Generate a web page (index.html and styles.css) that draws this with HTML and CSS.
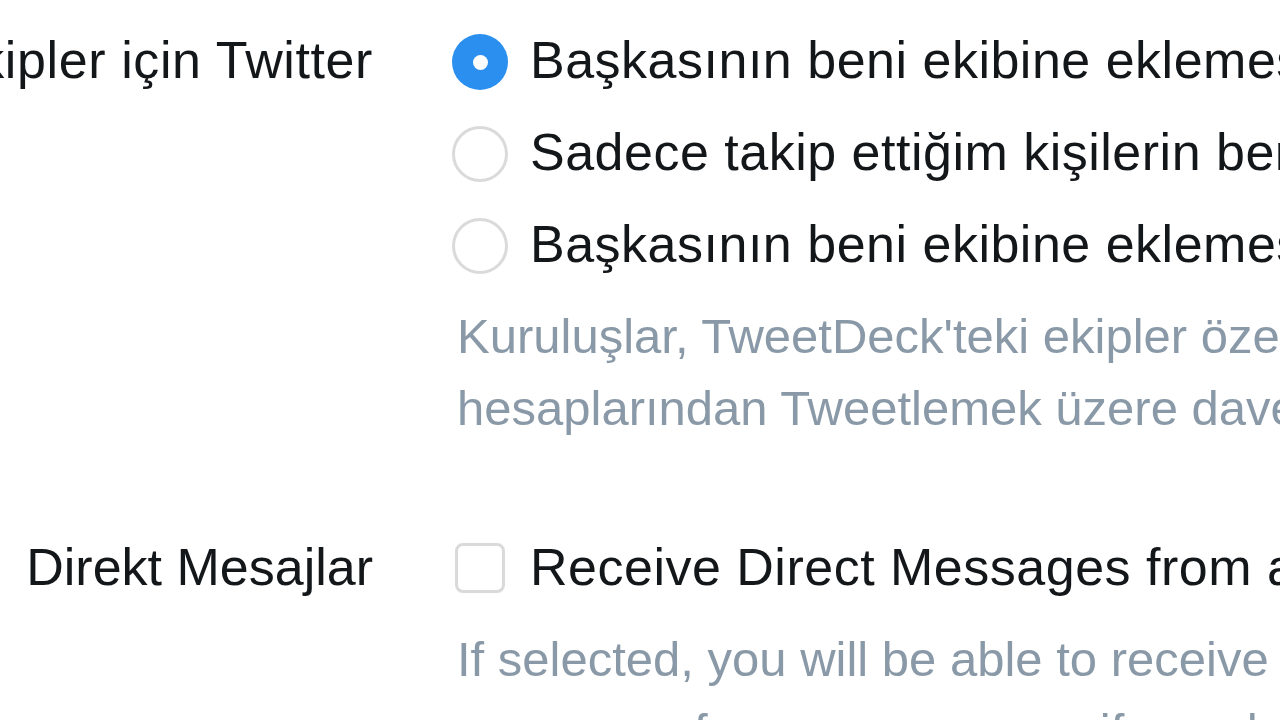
FILE: index.html
```html
<!DOCTYPE html>
<html lang="tr">
<head>
<meta charset="utf-8">
<title>Ayarlar</title>
<link rel="stylesheet" href="styles.css">
</head>
<body>
<div class="settings">
  <section class="row row-teams">
    <div class="label"><span>Ekipler için Twitter</span></div>
    <div class="control">
      <label class="option"><span class="radio checked"></span><span class="option-text">Başkasının beni ekibine eklemesine izin ver</span></label>
      <label class="option"><span class="radio"></span><span class="option-text">Sadece takip ettiğim kişilerin beni ekibine eklemesine izin ver</span></label>
      <label class="option"><span class="radio"></span><span class="option-text">Başkasının beni ekibine eklemesine izin verme</span></label>
      <p class="help">Kuruluşlar, TweetDeck'teki ekipler özelliği ile birden çok kişiyi<br>hesaplarından Tweetlemek üzere davet edebilir.</p>
    </div>
  </section>
  <section class="row row-dm">
    <div class="label"><span>Direkt Mesajlar</span></div>
    <div class="control">
      <label class="option"><span class="checkbox"></span><span class="option-text">Receive Direct Messages from anyone</span></label>
      <p class="help">If selected, you will be able to receive<br>messages from anyone even if you do not follow them.</p>
    </div>
  </section>
</div>
</body>
</html>
```
FILE: styles.css
```css
html, body {
  margin: 0;
  padding: 0;
  background: #ffffff;
  overflow: hidden;
}
body {
  width: 1280px;
  height: 720px;
  font-family: "Liberation Sans", Arial, sans-serif;
  color: #14171a;
}
.settings {
  display: flex;
  flex-direction: column;
  padding-top: 14px;
}
.row {
  display: flex;
  gap: 79px;
}
.row-dm {
  margin-top: 77px;
}
.label {
  flex: 0 0 373px;
  width: 373px;
  min-width: 0;
  height: 92px;
  display: flex;
  justify-content: flex-end;
  align-items: center;
  font-size: 52px;
  white-space: nowrap;
}
.label span {
  flex: 0 0 auto;
}
.row-teams .label span {
  letter-spacing: 0.6px;
}
.control {
  display: flex;
  flex-direction: column;
  flex: 1 1 auto;
  min-width: 0;
}
.option {
  display: flex;
  align-items: center;
  height: 92px;
  font-size: 52px;
  white-space: nowrap;
}
.option-text {
  letter-spacing: 0.5px;
}
.radio {
  flex: 0 0 auto;
  box-sizing: border-box;
  width: 56px;
  height: 56px;
  border-radius: 50%;
  border: 3px solid #dadada;
  background: #fff;
  margin-right: 22px;
  margin-top: 4px;
  position: relative;
}
.radio.checked {
  border: none;
  background: #2b8ff0;
}
.radio.checked::after {
  content: "";
  position: absolute;
  left: 50%;
  top: 50%;
  width: 15px;
  height: 15px;
  margin: -7.5px 0 0 -7.5px;
  border-radius: 50%;
  background: #fff;
}
.checkbox {
  flex: 0 0 auto;
  box-sizing: border-box;
  width: 50px;
  height: 50px;
  border: 3px solid #dadada;
  border-radius: 8px;
  background: #fff;
  margin-left: 3px;
  margin-right: 25px;
  margin-top: 2px;
}
.help {
  margin: 10px 0 0 5px;
  font-size: 49px;
  line-height: 72px;
  color: #8a99a7;
  white-space: nowrap;
}
```
